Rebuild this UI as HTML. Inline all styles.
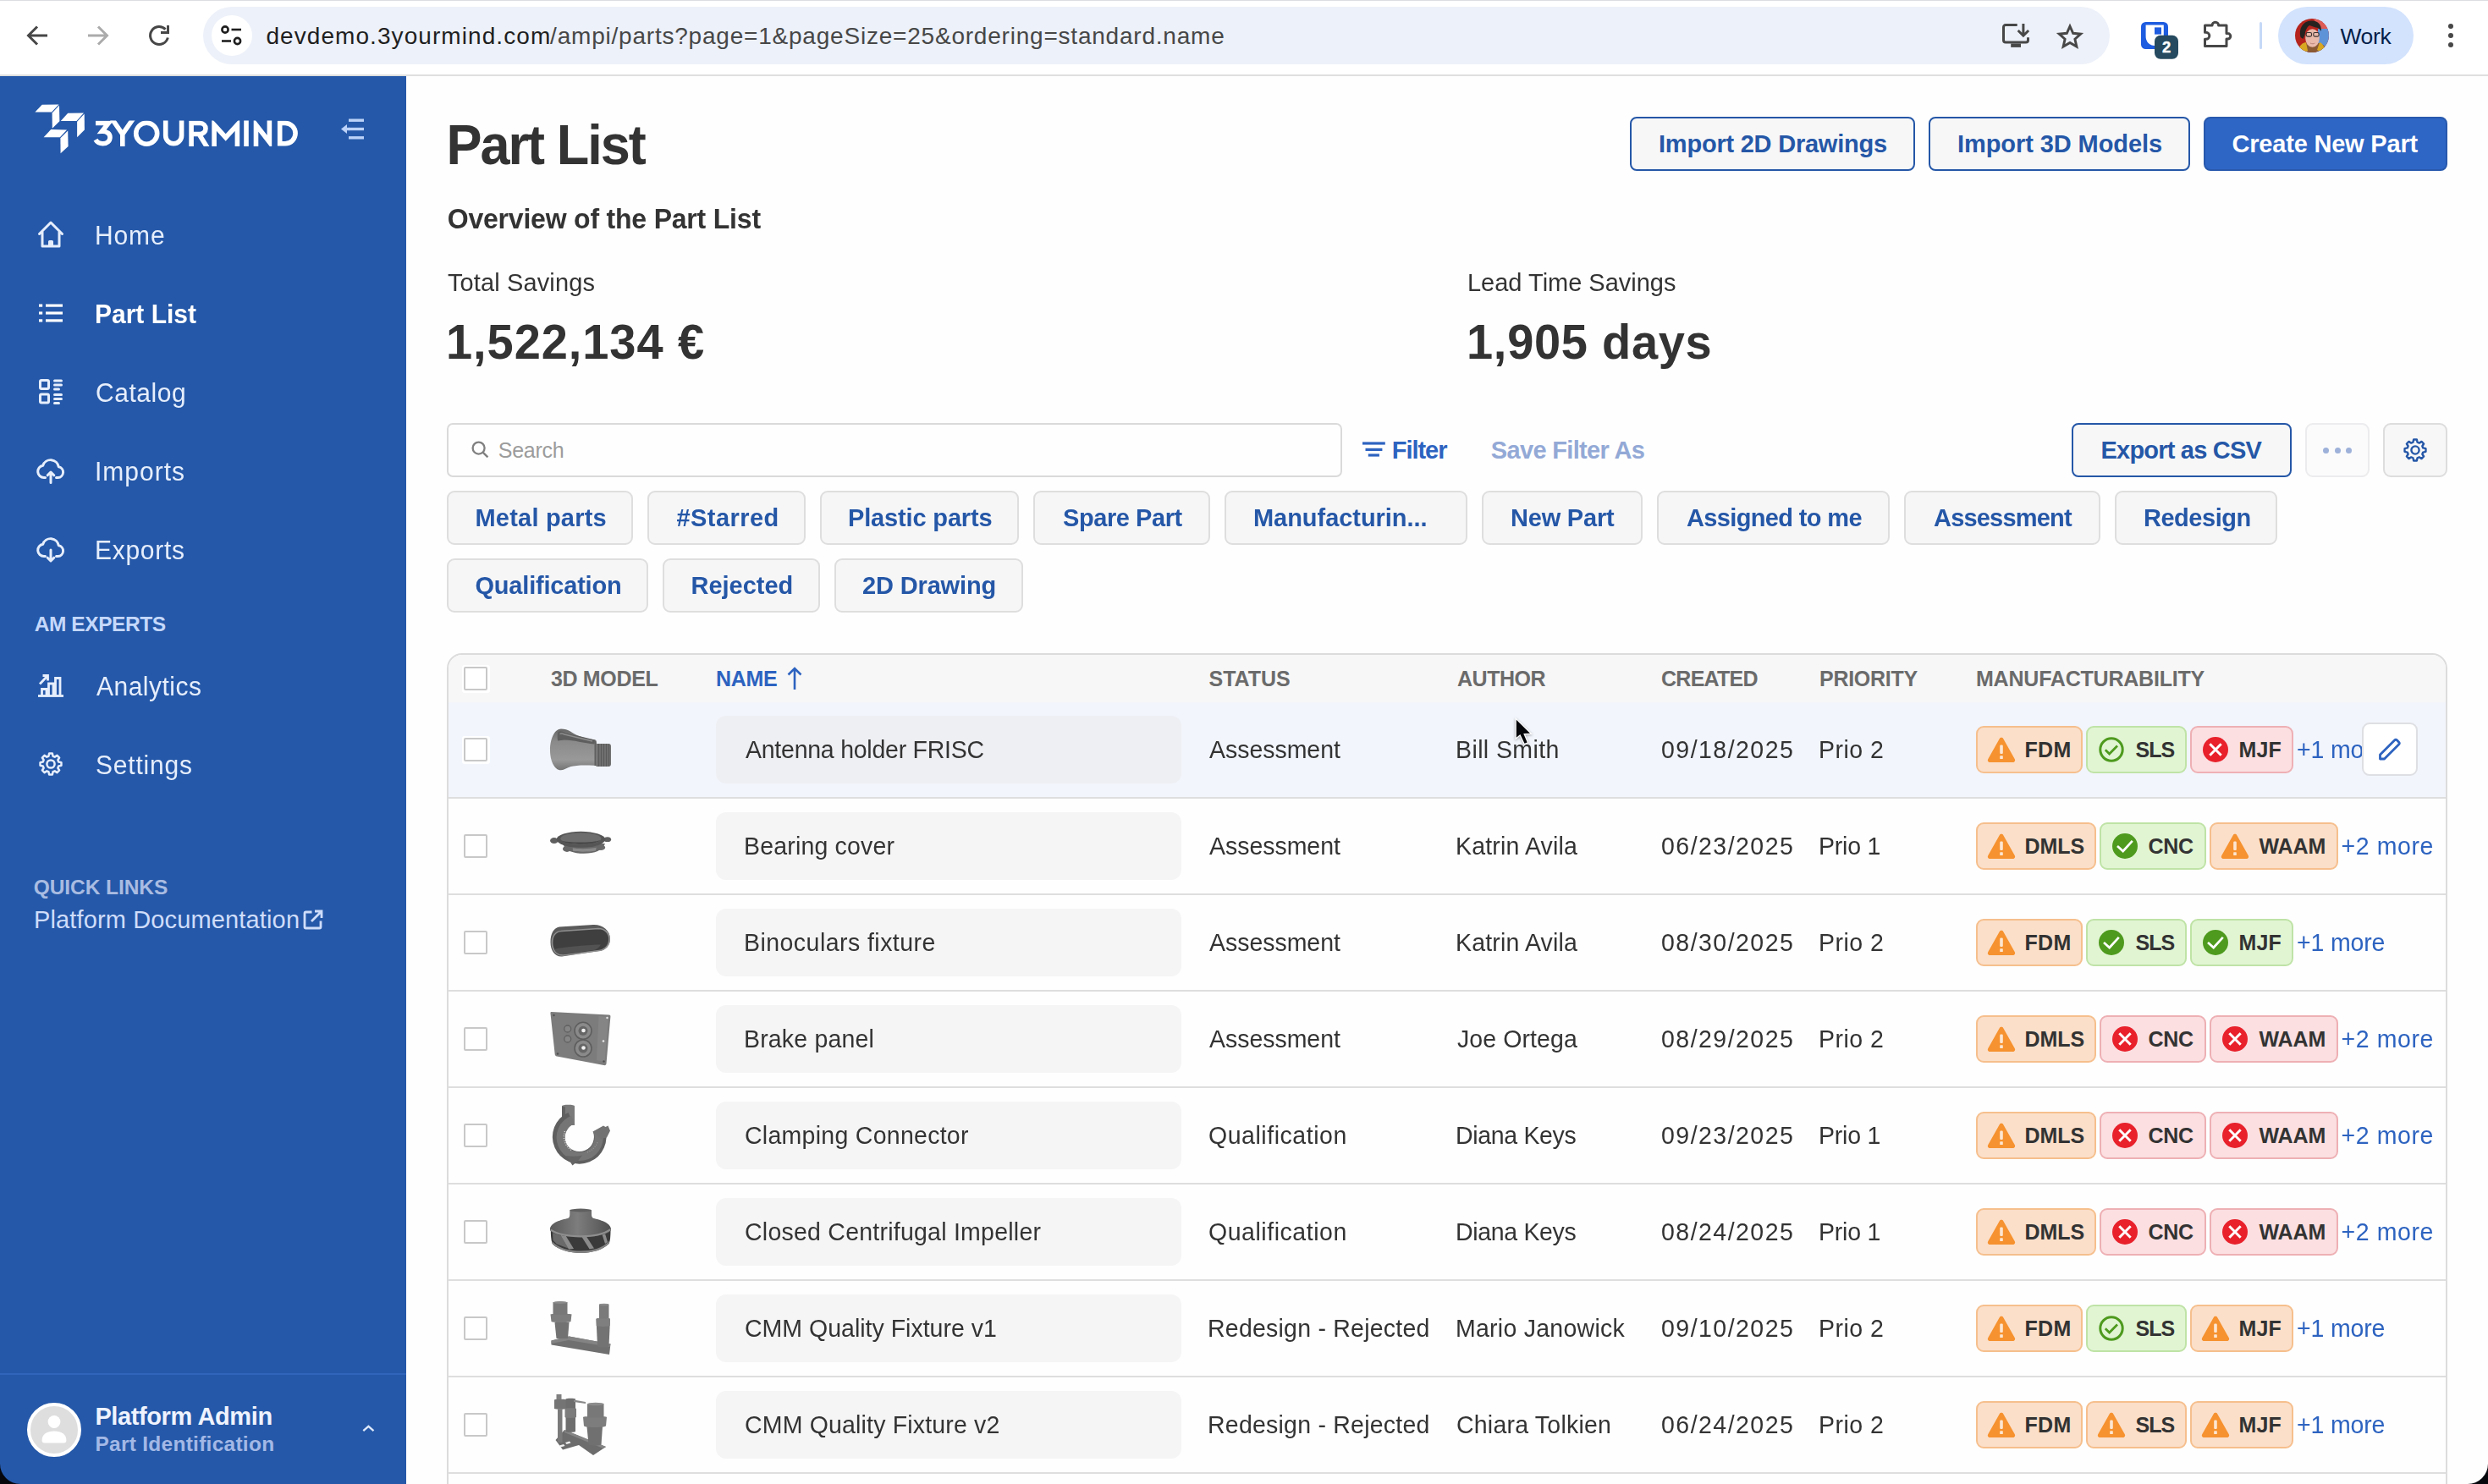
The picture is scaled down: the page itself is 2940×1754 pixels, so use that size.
<!DOCTYPE html>
<html><head><meta charset="utf-8"><title>Part List</title>
<style>
html,body{margin:0;padding:0;width:2940px;height:1754px;overflow:hidden;}
body{width:2940px;height:1754px;overflow:hidden;position:relative;background:#fefefe;font-family:"Liberation Sans",sans-serif;}
.a{position:absolute;box-sizing:border-box;}
.t{position:absolute;white-space:nowrap;}
svg{display:block;overflow:visible;}
#pg{position:absolute;left:0;top:0;width:2940px;height:1754px;overflow:hidden;}
</style></head><body><div id="pg">
<div class="a" style="left:0px;top:0px;width:2940px;height:90px;background:#ffffff;"></div>
<div class="a" style="left:0px;top:0px;width:2940px;height:1px;background:#dcdde1;"></div>
<div class="a" style="left:0px;top:88px;width:2940px;height:2px;background:#dfdfdf;"></div>
<svg class="a" style="left:30px;top:28px;" width="28" height="28" viewBox="0 0 28 28"><path d="M26 14H4M14 3.5L3.5 14L14 24.5" fill="none" stroke="#474747" stroke-width="3"/></svg>
<svg class="a" style="left:102px;top:28px;" width="28" height="28" viewBox="0 0 28 28"><path d="M2 14H24M14 3.5L24.5 14L14 24.5" fill="none" stroke="#ababab" stroke-width="3"/></svg>
<svg class="a" style="left:174px;top:28px;" width="28" height="28" viewBox="0 0 28 28"><path d="M24.3 16.5A10.5 10.5 0 1 1 21.5 6.6" fill="none" stroke="#474747" stroke-width="3"/><path d="M16 10.5H24.5V2" fill="none" stroke="#474747" stroke-width="3"/></svg>
<div class="a" style="left:240px;top:8px;width:2253px;height:68px;background:#edf1f9;border-radius:34px;"></div>
<div class="a" style="left:250px;top:18px;width:48px;height:48px;background:#ffffff;border-radius:24px;"></div>
<svg class="a" style="left:260px;top:30px;" width="28" height="24" viewBox="0 0 28 24"><circle cx="6" cy="5" r="3.6" fill="none" stroke="#1f1f1f" stroke-width="2.6"/><path d="M13.5 5H25" stroke="#1f1f1f" stroke-width="2.6"/><circle cx="20.5" cy="18.5" r="3.6" fill="none" stroke="#1f1f1f" stroke-width="2.6"/><path d="M2 18.5H13" stroke="#1f1f1f" stroke-width="2.6"/></svg>
<span class="t" style="left:314.40px;top:27px;font-size:28px;line-height:31px;color:#1f1f1f;letter-spacing:1.072px;">devdemo.3yourmind.com</span>
<span class="t" style="left:650.10px;top:27px;font-size:28px;line-height:31px;color:#474747;letter-spacing:0.787px;">/ampi/parts?page=1&amp;pageSize=25&amp;ordering=standard.name</span>
<svg class="a" style="left:2366px;top:27px;" width="32" height="30" viewBox="0 0 32 30"><path d="M17.700 2.500H4a2.500 2.500 0 0 0-2.500 2.500V20.500a2.500 2.500 0 0 0 2.500 2.500H28a2.500 2.500 0 0 0 2.500-2.500V17.300" fill="none" stroke="#474747" stroke-width="3"/><rect x="10.200" y="24.500" width="11.800" height="4.400" fill="#474747"/><path d="M24.900 1V14.500M18.700 9L24.900 15.200L31.100 9" fill="none" stroke="#474747" stroke-width="3"/></svg>
<svg class="a" style="left:2430px;top:27px;" width="32" height="30" viewBox="0 0 32 30"><path d="M16 4l3.700 8.300 9 .900-6.800 6 2 8.900L16 23.500 8.100 28.100l2-8.900-6.800-6 9-.900z" fill="none" stroke="#474747" stroke-width="2.900" stroke-linejoin="miter"/></svg>
<svg class="a" style="left:2530px;top:26px;" width="46" height="46" viewBox="0 0 46 46"><rect x="0" y="0" width="32" height="32" rx="5.500" fill="#1e5ce0"/><path d="M5.600 3.400H26.800V28H16C10 28 5.600 23 5.600 17z" fill="#ffffff"/><rect x="16" y="6.400" width="8" height="8.200" fill="#1e5ce0"/><rect x="16" y="15.800" width="28" height="28" rx="7" fill="#264a5f"/></svg>
<span class="t" style="left:2555.00px;top:45px;font-size:18.5px;line-height:21px;color:#ffffff;font-weight:700;-webkit-text-stroke:0.400px #ffffff;">2</span>
<svg class="a" style="left:2604px;top:24px;" width="34" height="34" viewBox="0 0 34 34"><path d="M1.500 6h8.500a3.800 3.800 0 0 1 7.600 0h9.400v9.500h1.500a3.300 3.300 0 0 1 0 6.600h-1.500v8.400H1.500v-8.200h1.300a4 4 0 0 0 0-8h-1.300z" fill="none" stroke="#474747" stroke-width="3" stroke-linejoin="round"/></svg>
<div class="a" style="left:2670px;top:26px;width:3px;height:32px;background:#c5d8f7;border-radius:1.5px;"></div>
<div class="a" style="left:2692px;top:8px;width:160px;height:68px;background:#d3e3fd;border-radius:34px;"></div>
<svg class="a" style="left:2712px;top:22px;" width="40" height="40" viewBox="0 0 40 40"><defs><clipPath id="av"><circle cx="20" cy="20" r="20"/></clipPath></defs><g clip-path="url(#av)"><rect width="40" height="40" fill="#b5241d"/><path d="M22 0h18v14L28 12z" fill="#dd5a55"/><path d="M27 12l13 0v28H27z" fill="#5f93d8"/><path d="M2 40c1-7 6-10 10-11l16 0c5 1 9 4 10 11z" fill="#8a5a35"/><path d="M5 34c2-4 5-6 8-6l2 10-6 2zM35 36c-1-4-3-7-6-8l-3 9 5 3z" fill="#d9a722"/><ellipse cx="20.500" cy="23" rx="8.300" ry="10.800" fill="#e9b9aa"/><path d="M6.500 22C4 12 9 3 19 2.500 27 2 31.500 7 31 15c-2-3-4-4.500-6.500-4.500L17 8c-3 2-5 6-5.500 11.500L9.500 24z" fill="#262220"/><rect x="13.200" y="16.500" width="6.300" height="4.600" rx="1.500" fill="none" stroke="#3b3230" stroke-width="1.100"/><rect x="21.800" y="16.500" width="6.300" height="4.600" rx="1.500" fill="none" stroke="#3b3230" stroke-width="1.100"/><path d="M18 29c2 1 4 1 5.500 0" stroke="#b8837a" stroke-width="1" fill="none"/></g></svg>
<span class="t" style="left:2765.40px;top:28px;font-size:26.5px;line-height:30px;color:#041e49;letter-spacing:-0.370px;">Work</span>
<div class="a" style="left:2892.8px;top:27.8px;width:6.4px;height:6.4px;background:#474747;border-radius:3.2px;"></div>
<div class="a" style="left:2892.8px;top:38.8px;width:6.4px;height:6.4px;background:#474747;border-radius:3.2px;"></div>
<div class="a" style="left:2892.8px;top:49.8px;width:6.4px;height:6.4px;background:#474747;border-radius:3.2px;"></div>
<div class="a" style="left:0px;top:90px;width:480px;height:1664px;background:#2558a8;"></div>
<svg class="a" style="left:0px;top:0px;" width="480" height="200" viewBox="0 0 480 200"><g fill="#ffffff">
<path d="M41.400 132.600L49.700 123.800L69.500 123.400L61 132.600z"/><path d="M61.600 133.400L70 124.400L70.400 143.200L61.800 151.800z"/>
<path d="M71.800 142.900L80.200 133.800L99 133.500L90.500 142.900z"/><path d="M91.100 143.800L99.700 134.600L99.900 153.500L91.100 162.200z"/>
<path d="M51.600 162.300L60.200 153.100L79 153.500L70.800 162.300z"/><path d="M71.400 163.200L80.200 154.600L80.600 172.900L71.600 181.300z"/>
</g></svg>
<svg class="a" style="left:0px;top:0px;" width="480" height="200" viewBox="0 0 480 200"><defs><clipPath id="lg"><rect x="105" y="142.500" width="255" height="30.400"/></clipPath></defs><g clip-path="url(#lg)" fill="none" stroke="#ffffff" stroke-width="5.600" stroke-linejoin="miter" stroke-miterlimit="10"><path d="M113 145.500H128.200L120.500 155.200C127 155 130 158.500 130 162.200c0 4.500-3.500 7.600-8.500 7.600-3.700 0-6.800-1.700-8.500-4.600"/><path d="M132 140L144.800 158.500L157.600 140M144.800 157.500V175"/><circle cx="173.200" cy="157.700" r="12.500"/><path d="M195.700 140V160.300a9.450 9.450 0 0 0 18.900 0V140"/><path d="M226.100 175V145.500H236.500a6.500 6.500 0 0 1 0 13H226.100M235.300 158.700L246 176"/><path d="M253.100 175V147.500L266.700 162.500L280.400 147.500V175"/><path d="M291 140V175"/><path d="M302.500 175V147.500L318.400 168V140"/><path d="M330.700 145.500H337a12.100 12.100 0 0 1 0 24.200H330.700z"/></g></svg>
<svg class="a" style="left:403px;top:139px;" width="28" height="28" viewBox="0 0 28 28"><g fill="#bcd2f8"><rect x="9" y="1.500" width="18" height="3.400"/><rect x="9" y="11.800" width="18" height="3.400"/><rect x="9" y="22.100" width="18" height="3.400"/><path d="M0 13.500L7 8v11z"/><rect x="4" y="11.800" width="6" height="3.400"/></g></svg>
<span class="t" style="left:112.00px;top:262px;font-size:30px;line-height:33px;color:#e6eefc;letter-spacing:0.884px;transform:scaleY(1.047);transform-origin:0 27px;">Home</span>
<span class="t" style="left:112.00px;top:355px;font-size:30px;line-height:33px;color:#ffffff;font-weight:700;letter-spacing:-0.005px;transform:scaleY(1.047);transform-origin:0 27px;">Part List</span>
<span class="t" style="left:113.00px;top:448px;font-size:30px;line-height:33px;color:#e6eefc;letter-spacing:0.546px;transform:scaleY(1.047);transform-origin:0 27px;">Catalog</span>
<span class="t" style="left:112.00px;top:541px;font-size:30px;line-height:33px;color:#e6eefc;letter-spacing:0.995px;transform:scaleY(1.047);transform-origin:0 27px;">Imports</span>
<span class="t" style="left:112.00px;top:634px;font-size:30px;line-height:33px;color:#e6eefc;letter-spacing:0.714px;transform:scaleY(1.047);transform-origin:0 27px;">Exports</span>
<span class="t" style="left:114.00px;top:795px;font-size:30px;line-height:33px;color:#e6eefc;letter-spacing:0.494px;transform:scaleY(1.047);transform-origin:0 27px;">Analytics</span>
<span class="t" style="left:113.00px;top:888px;font-size:30px;line-height:33px;color:#e6eefc;letter-spacing:0.799px;transform:scaleY(1.047);transform-origin:0 27px;">Settings</span>
<svg class="a" style="left:44px;top:260px;" width="32" height="34" viewBox="0 0 32 34"><path d="M2.500 16.500L16 3L29.500 16.500M6 14v17h20V14M14.500 31v-5.500h3V31" fill="none" stroke="#e6eefc" stroke-width="3" stroke-linejoin="round" stroke-linecap="round" stroke-linecap="butt"/></svg>
<svg class="a" style="left:46px;top:359px;" width="28" height="22" viewBox="0 0 28 22"><g fill="#ffffff"><rect x="0" y="0.500" width="4.200" height="3.200"/><rect x="8" y="0.500" width="20" height="3.200"/><rect x="0" y="9.400" width="4.200" height="3.200"/><rect x="8" y="9.400" width="20" height="3.200"/><rect x="0" y="18.300" width="4.200" height="3.200"/><rect x="8" y="18.300" width="20" height="3.200"/></g></svg>
<svg class="a" style="left:46px;top:448px;" width="28" height="30" viewBox="0 0 28 30"><g fill="none" stroke="#e6eefc" stroke-width="3"><rect x="1.500" y="1.500" width="10" height="10" rx="1.500"/><rect x="1.500" y="18" width="10" height="10" rx="1.500"/></g><g fill="#e6eefc"><rect x="17" y="0.500" width="11" height="3" rx="1.500"/><rect x="17" y="5.500" width="11" height="3" rx="1.500"/><rect x="17" y="10.500" width="8" height="3" rx="1.500"/><rect x="17" y="17" width="11" height="3" rx="1.500"/><rect x="17" y="22" width="11" height="3" rx="1.500"/><rect x="17" y="27" width="8" height="3" rx="1.500"/></g></svg>
<svg class="a" style="left:43px;top:542px;" width="34" height="30" viewBox="0 0 34 30"><path d="M10.500 22.500H9a7.200 7.200 0 0 1-1.300-14.300A9.600 9.600 0 0 1 26.300 9.800 6.400 6.400 0 0 1 25.500 22.500H23.500" fill="none" stroke="#e6eefc" stroke-width="3" stroke-linejoin="round" stroke-linecap="round"/><path d="M17 28.500V17M13.200 19.800l3.800-3.800 3.800 3.800" fill="none" stroke="#e6eefc" stroke-width="3" stroke-linejoin="round" stroke-linecap="round"/></svg>
<svg class="a" style="left:43px;top:635px;" width="34" height="30" viewBox="0 0 34 30"><path d="M10.500 22.500H9a7.200 7.200 0 0 1-1.300-14.300A9.600 9.600 0 0 1 26.300 9.800 6.400 6.400 0 0 1 25.500 22.500H23.500" fill="none" stroke="#e6eefc" stroke-width="3" stroke-linejoin="round" stroke-linecap="round"/><path d="M17 15V27M13.200 24.200l3.800 3.800 3.800-3.800" fill="none" stroke="#e6eefc" stroke-width="3" stroke-linejoin="round" stroke-linecap="round"/></svg>
<svg class="a" style="left:45px;top:796px;" width="30" height="28" viewBox="0 0 30 28"><g fill="none" stroke="#e6eefc" stroke-width="2.800"><path d="M0 26.500H30"/><path d="M4.500 26v-7.500h5.500V26M12.500 26V12h5.500v14M20.500 26V5.500h5.500V26"/><path d="M2 12.500L10.500 3.500M5.500 2.500h6v6"/></g></svg>
<svg class="a" style="left:46.2px;top:889px;" width="28" height="28" viewBox="0 0 28 28"><g fill="none" stroke="#e6eefc" stroke-width="2.500" stroke-linejoin="round"><path d="M11.43 4.75L12.14 1.54L15.86 1.54L16.57 4.75L18.73 5.64L21.49 3.87L24.13 6.51L22.36 9.27L23.25 11.43L26.46 12.14L26.46 15.86L23.25 16.57L22.36 18.73L24.13 21.49L21.49 24.13L18.73 22.36L16.57 23.25L15.86 26.46L12.14 26.46L11.43 23.25L9.27 22.36L6.51 24.13L3.87 21.49L5.64 18.73L4.75 16.57L1.54 15.86L1.54 12.14L4.75 11.43L5.64 9.27L3.87 6.51L6.51 3.87L9.27 5.64z"/><circle cx="14" cy="14" r="4.600"/></g></svg>
<span class="t" style="left:40.70px;top:724px;font-size:24.5px;line-height:27px;color:#c5d8fb;font-weight:700;letter-spacing:-0.427px;">AM EXPERTS</span>
<span class="t" style="left:39.70px;top:1035px;font-size:24.5px;line-height:27px;color:#a9bce2;font-weight:700;letter-spacing:-0.061px;">QUICK LINKS</span>
<span class="t" style="left:39.90px;top:1071px;font-size:29px;line-height:32px;color:#cfddfa;letter-spacing:0.145px;">Platform Documentation</span>
<svg class="a" style="left:358px;top:1075px;" width="24" height="24" viewBox="0 0 24 24"><path d="M10.500 3H3.500a1.500 1.500 0 0 0-1.500 1.500v16a1.500 1.500 0 0 0 1.500 1.500h16a1.500 1.500 0 0 0 1.500-1.500V13.500M14 2h8v8M22 2L10 14" fill="none" stroke="#cfddfa" stroke-width="2.800"/></svg>
<div class="a" style="left:0px;top:1623px;width:480px;height:2px;background:#3065bb;"></div>
<div class="a" style="left:32px;top:1658px;width:64px;height:64px;background:#dedede;border:4px solid #ffffff;border-radius:32px;"></div>
<svg class="a" style="left:32px;top:1658px;" width="64" height="64" viewBox="0 0 64 64"><circle cx="32" cy="22.500" r="7.400" fill="#ffffff"/><path d="M17.600 44.500c0-7.500 6-11 14.400-11s14.400 3.500 14.400 11c0 1.800-1 3-2.800 3H20.400c-1.800 0-2.800-1.200-2.800-3z" fill="#ffffff"/></svg>
<span class="t" style="left:112.40px;top:1658px;font-size:29px;line-height:32px;color:#eef3fe;font-weight:700;letter-spacing:-0.393px;">Platform Admin</span>
<span class="t" style="left:112.40px;top:1693px;font-size:24.5px;line-height:27px;color:#a3b8e6;font-weight:700;letter-spacing:0.269px;">Part Identification</span>
<svg class="a" style="left:427px;top:1679.5px;" width="16" height="14" viewBox="0 0 16 14"><path d="M2.300 11.200L8.400 5.800L14.500 11.200" fill="none" stroke="#dde8fb" stroke-width="2.300"/></svg>
<span class="t" style="left:527.50px;top:137px;font-size:63px;line-height:70px;color:#333333;font-weight:700;letter-spacing:-1.985px;transform:scaleY(1.050);transform-origin:0 57px;">Part List</span>
<span class="t" style="left:528.70px;top:241px;font-size:32px;line-height:36px;color:#333333;font-weight:700;letter-spacing:-0.203px;transform:scaleY(1.036);transform-origin:0 29px;">Overview of the Part List</span>
<span class="t" style="left:529.00px;top:318px;font-size:29px;line-height:32px;color:#333333;letter-spacing:0.117px;transform:scaleY(1.027);transform-origin:0 26px;">Total Savings</span>
<span class="t" style="left:527.00px;top:373px;font-size:56px;line-height:63px;color:#333333;font-weight:700;letter-spacing:0.930px;transform:scaleY(1.036);transform-origin:0 51px;">1,522,134 €</span>
<span class="t" style="left:1734.00px;top:318px;font-size:29px;line-height:32px;color:#333333;letter-spacing:-0.010px;transform:scaleY(1.027);transform-origin:0 26px;">Lead Time Savings</span>
<span class="t" style="left:1733.00px;top:373px;font-size:56px;line-height:63px;color:#333333;font-weight:700;letter-spacing:0.711px;transform:scaleY(1.036);transform-origin:0 51px;">1,905 days</span>
<div class="a" style="left:1926px;top:138px;width:337px;height:64px;background:#f7f7f8;border:2px solid #2557a7;border-radius:8px;"></div>
<span class="t" style="left:1960.00px;top:154px;font-size:29px;line-height:32px;color:#2557a7;font-weight:700;letter-spacing:-0.224px;">Import 2D Drawings</span>
<div class="a" style="left:2279px;top:138px;width:309px;height:64px;background:#f7f7f8;border:2px solid #2557a7;border-radius:8px;"></div>
<span class="t" style="left:2313.00px;top:154px;font-size:29px;line-height:32px;color:#2557a7;font-weight:700;letter-spacing:-0.079px;">Import 3D Models</span>
<div class="a" style="left:2604px;top:138px;width:288px;height:64px;background:#2e66c5;border:2px solid #2859ad;border-radius:8px;"></div>
<span class="t" style="left:2637.50px;top:154px;font-size:29px;line-height:32px;color:#ffffff;font-weight:700;letter-spacing:-0.199px;">Create New Part</span>
<div class="a" style="left:528px;top:500px;width:1058px;height:64px;background:#fefefe;border:2px solid #dadada;border-radius:7px;"></div>
<svg class="a" style="left:556px;top:521px;" width="22" height="22" viewBox="0 0 22 22"><circle cx="9.600" cy="8.600" r="7" fill="none" stroke="#808080" stroke-width="2.300"/><path d="M14.600 13.600l5.800 5.800" stroke="#808080" stroke-width="2.400"/></svg>
<span class="t" style="left:588.80px;top:518px;font-size:25px;line-height:28px;color:#9c9c9c;letter-spacing:-0.263px;">Search</span>
<svg class="a" style="left:1610px;top:522px;" width="27" height="20" viewBox="0 0 27 20"><g fill="#2d63c0"><rect x="0" y="0.400" width="26.800" height="3.200"/><rect x="3.500" y="7.800" width="19.900" height="3.200"/><rect x="6.800" y="14.400" width="13.100" height="3.200"/></g></svg>
<span class="t" style="left:1644.80px;top:516px;font-size:29px;line-height:32px;color:#2d63c0;font-weight:700;letter-spacing:-1.044px;">Filter</span>
<span class="t" style="left:1761.80px;top:516px;font-size:29px;line-height:32px;color:#93a9d6;font-weight:700;letter-spacing:-0.663px;">Save Filter As</span>
<div class="a" style="left:2448px;top:500px;width:260px;height:64px;background:#f7f7f8;border:2px solid #2557a7;border-radius:8px;"></div>
<span class="t" style="left:2482.50px;top:516px;font-size:29px;line-height:32px;color:#2557a7;font-weight:700;letter-spacing:-0.792px;">Export as CSV</span>
<div class="a" style="left:2724px;top:500px;width:76px;height:64px;background:#fbfbfc;border:2px solid #ececee;border-radius:9px;"></div>
<div class="a" style="left:2745px;top:528.5px;width:7px;height:7px;background:#9db1d9;border-radius:3.5px;"></div>
<div class="a" style="left:2758.5px;top:528.5px;width:7px;height:7px;background:#9db1d9;border-radius:3.5px;"></div>
<div class="a" style="left:2772px;top:528.5px;width:7px;height:7px;background:#9db1d9;border-radius:3.5px;"></div>
<div class="a" style="left:2816px;top:500px;width:76px;height:64px;background:#f7f7f8;border:2px solid #dddddd;border-radius:9px;"></div>
<svg class="a" style="left:2840px;top:518.2px;" width="28" height="28" viewBox="0 0 28 28"><g fill="none" stroke="#2557a7" stroke-width="2.400" stroke-linejoin="round"><path d="M11.43 4.75L12.14 1.54L15.86 1.54L16.57 4.75L18.73 5.64L21.49 3.87L24.13 6.51L22.36 9.27L23.25 11.43L26.46 12.14L26.46 15.86L23.25 16.57L22.36 18.73L24.13 21.49L21.49 24.13L18.73 22.36L16.57 23.25L15.86 26.46L12.14 26.46L11.43 23.25L9.27 22.36L6.51 24.13L3.87 21.49L5.64 18.73L4.75 16.57L1.54 15.86L1.54 12.14L4.75 11.43L5.64 9.27L3.87 6.51L6.51 3.87L9.27 5.64z"/><circle cx="14" cy="14" r="4.600"/></g></svg>
<div class="a" style="left:528px;top:580px;width:220px;height:64px;background:#f6f6f7;border:2px solid #dedede;border-radius:9px;"></div>
<span class="t" style="left:561.50px;top:596px;font-size:29px;line-height:32px;color:#2557a7;font-weight:700;letter-spacing:0.202px;transform:scaleY(1.012);transform-origin:0 26px;">Metal parts</span>
<div class="a" style="left:765px;top:580px;width:187px;height:64px;background:#f6f6f7;border:2px solid #dedede;border-radius:9px;"></div>
<span class="t" style="left:799.50px;top:596px;font-size:29px;line-height:32px;color:#2557a7;font-weight:700;letter-spacing:0.435px;transform:scaleY(1.012);transform-origin:0 26px;">#Starred</span>
<div class="a" style="left:969px;top:580px;width:235px;height:64px;background:#f6f6f7;border:2px solid #dedede;border-radius:9px;"></div>
<span class="t" style="left:1002.00px;top:596px;font-size:29px;line-height:32px;color:#2557a7;font-weight:700;letter-spacing:-0.155px;transform:scaleY(1.012);transform-origin:0 26px;">Plastic parts</span>
<div class="a" style="left:1221px;top:580px;width:209px;height:64px;background:#f6f6f7;border:2px solid #dedede;border-radius:9px;"></div>
<span class="t" style="left:1256.00px;top:596px;font-size:29px;line-height:32px;color:#2557a7;font-weight:700;letter-spacing:-0.436px;transform:scaleY(1.012);transform-origin:0 26px;">Spare Part</span>
<div class="a" style="left:1447px;top:580px;width:287px;height:64px;background:#f6f6f7;border:2px solid #dedede;border-radius:9px;"></div>
<span class="t" style="left:1481.00px;top:596px;font-size:29px;line-height:32px;color:#2557a7;font-weight:700;letter-spacing:-0.048px;transform:scaleY(1.012);transform-origin:0 26px;">Manufacturin...</span>
<div class="a" style="left:1751px;top:580px;width:190px;height:64px;background:#f6f6f7;border:2px solid #dedede;border-radius:9px;"></div>
<span class="t" style="left:1785.00px;top:596px;font-size:29px;line-height:32px;color:#2557a7;font-weight:700;letter-spacing:-0.207px;transform:scaleY(1.012);transform-origin:0 26px;">New Part</span>
<div class="a" style="left:1958px;top:580px;width:275px;height:64px;background:#f6f6f7;border:2px solid #dedede;border-radius:9px;"></div>
<span class="t" style="left:1993.00px;top:596px;font-size:29px;line-height:32px;color:#2557a7;font-weight:700;letter-spacing:-0.639px;transform:scaleY(1.012);transform-origin:0 26px;">Assigned to me</span>
<div class="a" style="left:2250px;top:580px;width:232px;height:64px;background:#f6f6f7;border:2px solid #dedede;border-radius:9px;"></div>
<span class="t" style="left:2285.00px;top:596px;font-size:29px;line-height:32px;color:#2557a7;font-weight:700;letter-spacing:-0.802px;transform:scaleY(1.012);transform-origin:0 26px;">Assessment</span>
<div class="a" style="left:2499px;top:580px;width:192px;height:64px;background:#f6f6f7;border:2px solid #dedede;border-radius:9px;"></div>
<span class="t" style="left:2533.00px;top:596px;font-size:29px;line-height:32px;color:#2557a7;font-weight:700;letter-spacing:-0.474px;transform:scaleY(1.012);transform-origin:0 26px;">Redesign</span>
<div class="a" style="left:528px;top:660px;width:238px;height:64px;background:#f6f6f7;border:2px solid #dedede;border-radius:9px;"></div>
<span class="t" style="left:561.50px;top:676px;font-size:29px;line-height:32px;color:#2557a7;font-weight:700;letter-spacing:-0.202px;transform:scaleY(1.012);transform-origin:0 26px;">Qualification</span>
<div class="a" style="left:783px;top:660px;width:186px;height:64px;background:#f6f6f7;border:2px solid #dedede;border-radius:9px;"></div>
<span class="t" style="left:816.50px;top:676px;font-size:29px;line-height:32px;color:#2557a7;font-weight:700;letter-spacing:-0.025px;transform:scaleY(1.012);transform-origin:0 26px;">Rejected</span>
<div class="a" style="left:986px;top:660px;width:223px;height:64px;background:#f6f6f7;border:2px solid #dedede;border-radius:9px;"></div>
<span class="t" style="left:1019.00px;top:676px;font-size:29px;line-height:32px;color:#2557a7;font-weight:700;letter-spacing:-0.146px;transform:scaleY(1.012);transform-origin:0 26px;">2D Drawing</span>
<div class="a" style="left:528px;top:772px;width:2364px;height:1000px;background:#fefefe;border:2px solid #dcdcdc;border-radius:18px;"></div>
<div class="a" style="left:530px;top:774px;width:2360px;height:56px;background:#f7f7f7;border-radius:16px 16px 0 0;"></div>
<span class="t" style="left:651.00px;top:788px;font-size:25px;line-height:28px;color:#6b6b6b;font-weight:700;letter-spacing:-0.345px;">3D MODEL</span>
<span class="t" style="left:846.00px;top:788px;font-size:25px;line-height:28px;color:#2d63c0;font-weight:700;letter-spacing:-0.312px;">NAME</span>
<svg class="a" style="left:929px;top:787px;" width="20" height="30" viewBox="0 0 20 30"><path d="M10 28V3M2.500 10.500L10 3L17.500 10.500" fill="none" stroke="#2d63c0" stroke-width="2.600"/></svg>
<span class="t" style="left:1428.50px;top:788px;font-size:25px;line-height:28px;color:#6b6b6b;font-weight:700;letter-spacing:-0.024px;">STATUS</span>
<span class="t" style="left:1722.00px;top:788px;font-size:25px;line-height:28px;color:#6b6b6b;font-weight:700;letter-spacing:-0.477px;">AUTHOR</span>
<span class="t" style="left:1963.00px;top:788px;font-size:25px;line-height:28px;color:#6b6b6b;font-weight:700;letter-spacing:-0.738px;">CREATED</span>
<span class="t" style="left:2150.00px;top:788px;font-size:25px;line-height:28px;color:#6b6b6b;font-weight:700;letter-spacing:-0.272px;">PRIORITY</span>
<span class="t" style="left:2335.00px;top:788px;font-size:25px;line-height:28px;color:#6b6b6b;font-weight:700;letter-spacing:-0.214px;">MANUFACTURABILITY</span>
<div class="a" style="left:545.5px;top:785.5px;width:33px;height:33px;background:#ffffff;border-radius:3px;"></div>
<div class="a" style="left:548px;top:788px;width:28px;height:28px;background:#ffffff;border:2px solid #c8c8c8;border-radius:2px;"></div>
<div class="a" style="left:530px;top:830px;width:2360px;height:112px;background:#f2f5fc;"></div>
<div class="a" style="left:530px;top:942px;width:2360px;height:2px;background:#dedede;"></div>
<div class="a" style="left:545.5px;top:869.5px;width:33px;height:33px;background:#ffffff;border-radius:3px;"></div>
<div class="a" style="left:548px;top:872px;width:28px;height:28px;background:#ffffff;border:2px solid #c8c8c8;border-radius:2px;"></div>
<svg class="a" style="left:650px;top:850px" width="72" height="72" viewBox="0 0 72 72"><defs><linearGradient id="g0" x1="0" y1="0" x2="0" y2="1"><stop offset="0" stop-color="#666666"/><stop offset=".3" stop-color="#8a8a8a"/><stop offset=".75" stop-color="#999999"/><stop offset="1" stop-color="#747474"/></linearGradient></defs>
<path d="M54.500 29h14.500c2 0 3 1 3 3v21c0 2-1 3-3 3H54.500z" fill="#727272"/>
<path d="M57.500 29v27M60.500 29v27M63.500 29v27M66.500 29v27M69.500 29.500v26" stroke="#5a5a5a" stroke-width="1.200"/>
<path d="M13 11.500C17 11.500 21 12.500 24 14.500 30 18.500 38 22.500 54 24.500L55 28V55L51.500 54.800C40 54 30 54.500 24.500 56 20 57.500 17 60 13 60.300 5 60.500 0 49 0 36.500 0 23 5.500 11.500 13 11.500z" fill="url(#g0)"/>
<path d="M9.500 15C12 13.500 15 14.500 17.500 16L53 24.500 52.500 29.500C40 28.500 28 24.500 17 24.500L9 25.500C8.500 21 8.500 17.500 9.500 15z" fill="#5e5e5e"/>
<path d="M11.500 17.500C13 16.500 15 17 17 18L50 26" fill="none" stroke="#8d8d8d" stroke-width="1.500"/>
<path d="M53.500 25.500V55" stroke="#5f5f5f" stroke-width="2"/></svg>
<div class="a" style="left:846px;top:846px;width:550px;height:80px;background:#eeeff3;border-radius:12px;"></div>
<span class="t" style="left:881.00px;top:870px;font-size:28.5px;line-height:32px;color:#333333;letter-spacing:-0.246px;transform:scaleY(1.051);transform-origin:0 26px;">Antenna holder FRISC</span>
<span class="t" style="left:1429.00px;top:870px;font-size:28.5px;line-height:32px;color:#333333;letter-spacing:-0.035px;transform:scaleY(1.051);transform-origin:0 26px;">Assessment</span>
<span class="t" style="left:1720.00px;top:870px;font-size:28.5px;line-height:32px;color:#333333;letter-spacing:0.397px;transform:scaleY(1.051);transform-origin:0 26px;">Bill Smith</span>
<span class="t" style="left:1963.00px;top:870px;font-size:28.5px;line-height:32px;color:#333333;letter-spacing:1.468px;transform:scaleY(1.051);transform-origin:0 26px;">09/18/2025</span>
<span class="t" style="left:2149.00px;top:870px;font-size:28.5px;line-height:32px;color:#333333;letter-spacing:0.479px;transform:scaleY(1.051);transform-origin:0 26px;">Prio 2</span>
<div class="a" style="left:2335px;top:858px;width:126px;height:56px;background:#fbdfc9;border:2px solid #f6bf8d;border-radius:9px;"></div>
<svg class="a" style="left:2348px;top:870px;" width="34" height="31" viewBox="0 0 34 31"><path d="M17 1.800c1 0 1.800.500 2.300 1.400l13.500 24c1 1.800-.200 3.800-2.300 3.800H3.500c-2.100 0-3.300-2-2.300-3.800l13.500-24C15.200 2.300 16 1.800 17 1.800z" fill="#f6922f"/><rect x="15.200" y="10.500" width="3.600" height="10.500" rx="1.200" fill="#fde6d2"/><rect x="15.200" y="23.200" width="3.600" height="3.800" rx=".600" fill="#fde6d2"/></svg>
<span class="t" style="left:2392.50px;top:872px;font-size:25px;line-height:28px;color:#333333;font-weight:700;letter-spacing:0.334px;">FDM</span>
<div class="a" style="left:2465px;top:858px;width:119px;height:56px;background:#e1f5d3;border:2px solid #bfe3a6;border-radius:9px;"></div>
<svg class="a" style="left:2480px;top:871px;" width="30" height="30" viewBox="0 0 30 30"><circle cx="15" cy="15" r="13.200" fill="none" stroke="#4e9a1e" stroke-width="3"/><path d="M7.800 15.300L12.600 20L22 10.500" fill="none" stroke="#4e9a1e" stroke-width="2.700"/></svg>
<span class="t" style="left:2523.50px;top:872px;font-size:25px;line-height:28px;color:#333333;font-weight:700;letter-spacing:-0.975px;">SLS</span>
<div class="a" style="left:2588px;top:858px;width:122px;height:56px;background:#fbdfe1;border:2px solid #eeb0b4;border-radius:9px;"></div>
<svg class="a" style="left:2603px;top:871px;" width="30" height="30" viewBox="0 0 30 30"><circle cx="15" cy="15" r="15" fill="#e8212b"/><path d="M8.300 8.300l13.400 13.400M21.700 8.300L8.300 21.700" fill="none" stroke="#ffffff" stroke-width="3"/></svg>
<span class="t" style="left:2645.50px;top:872px;font-size:25px;line-height:28px;color:#333333;font-weight:700;letter-spacing:0.135px;">MJF</span>
<span class="t" style="left:2714.00px;top:870px;font-size:28.5px;line-height:32px;color:#2d63c0;letter-spacing:-0.168px;transform:scaleY(1.051);transform-origin:0 26px;">+1 more</span>
<div class="a" style="left:2791px;top:854px;width:66px;height:63px;background:#ffffff;border:2px solid #dedfe3;border-radius:9px;"></div>
<svg class="a" style="left:2810px;top:871px;" width="28" height="28" viewBox="0 0 28 28"><path d="M2.500 21L19.500 4a2.200 2.200 0 0 1 3.100 0l1.900 1.900a2.200 2.200 0 0 1 0 3.100L7.500 26H2.500z" fill="none" stroke="#2d63c0" stroke-width="2.800" stroke-linejoin="round"/></svg>
<div class="a" style="left:530px;top:1056px;width:2360px;height:2px;background:#dedede;"></div>
<div class="a" style="left:548px;top:986px;width:28px;height:28px;background:#ffffff;border:2px solid #c8c8c8;border-radius:2px;"></div>
<svg class="a" style="left:650px;top:964px" width="72" height="72" viewBox="0 0 72 72"><ellipse cx="20" cy="39.300" rx="5" ry="3.600" fill="#666666"/><ellipse cx="60" cy="37.700" rx="5.200" ry="3.200" fill="#6c6c6c"/>
<path d="M15.500 34C18 41.500 27 44.800 40 44.800S62 41 65 33z" fill="#676767"/>
<path d="M26.700 38.300C32 39.500 48 39.500 54.700 37.800L54 41.500C46 43 33 43 27 41.800z" fill="#898989"/>
<ellipse cx="4.800" cy="29.600" rx="4.800" ry="3.500" fill="#5f5f5f"/><ellipse cx="67.800" cy="28.200" rx="4.300" ry="2.900" fill="#5f5f5f"/>
<ellipse cx="36.400" cy="28.200" rx="28.800" ry="9.500" fill="#555555"/>
<ellipse cx="36.400" cy="27.200" rx="24" ry="7" fill="#6d6d6d"/>
<path d="M13.500 29.500C20 35.500 53 35.500 59.500 29 52 32.300 21 32.500 13.500 29.500z" fill="#484848"/></svg>
<div class="a" style="left:846px;top:960px;width:550px;height:80px;background:#f5f5f5;border-radius:12px;"></div>
<span class="t" style="left:879.00px;top:984px;font-size:28.5px;line-height:32px;color:#333333;letter-spacing:0.179px;transform:scaleY(1.051);transform-origin:0 26px;">Bearing cover</span>
<span class="t" style="left:1429.00px;top:984px;font-size:28.5px;line-height:32px;color:#333333;letter-spacing:-0.035px;transform:scaleY(1.051);transform-origin:0 26px;">Assessment</span>
<span class="t" style="left:1720.00px;top:984px;font-size:28.5px;line-height:32px;color:#333333;letter-spacing:0.163px;transform:scaleY(1.051);transform-origin:0 26px;">Katrin Avila</span>
<span class="t" style="left:1963.00px;top:984px;font-size:28.5px;line-height:32px;color:#333333;letter-spacing:1.468px;transform:scaleY(1.051);transform-origin:0 26px;">06/23/2025</span>
<span class="t" style="left:2149.00px;top:984px;font-size:28.5px;line-height:32px;color:#333333;letter-spacing:-0.221px;transform:scaleY(1.051);transform-origin:0 26px;">Prio 1</span>
<div class="a" style="left:2335px;top:972px;width:142px;height:56px;background:#fbdfc9;border:2px solid #f6bf8d;border-radius:9px;"></div>
<svg class="a" style="left:2348px;top:984px;" width="34" height="31" viewBox="0 0 34 31"><path d="M17 1.800c1 0 1.800.500 2.300 1.400l13.500 24c1 1.800-.200 3.800-2.300 3.800H3.500c-2.100 0-3.300-2-2.300-3.800l13.500-24C15.200 2.300 16 1.800 17 1.800z" fill="#f6922f"/><rect x="15.200" y="10.500" width="3.600" height="10.500" rx="1.200" fill="#fde6d2"/><rect x="15.200" y="23.200" width="3.600" height="3.800" rx=".600" fill="#fde6d2"/></svg>
<span class="t" style="left:2392.50px;top:986px;font-size:25px;line-height:28px;color:#333333;font-weight:700;letter-spacing:-0.051px;">DMLS</span>
<div class="a" style="left:2481px;top:972px;width:126px;height:56px;background:#e1f5d3;border:2px solid #bfe3a6;border-radius:9px;"></div>
<svg class="a" style="left:2496px;top:985px;" width="30" height="30" viewBox="0 0 30 30"><circle cx="15" cy="15" r="15" fill="#4e9a1e"/><path d="M6 15L12.700 21L23.800 8.800" fill="none" stroke="#ffffff" stroke-width="2.700"/></svg>
<span class="t" style="left:2538.50px;top:986px;font-size:25px;line-height:28px;color:#333333;font-weight:700;letter-spacing:-0.309px;">CNC</span>
<div class="a" style="left:2611px;top:972px;width:152px;height:56px;background:#fbdfc9;border:2px solid #f6bf8d;border-radius:9px;"></div>
<svg class="a" style="left:2624px;top:984px;" width="34" height="31" viewBox="0 0 34 31"><path d="M17 1.800c1 0 1.800.500 2.300 1.400l13.500 24c1 1.800-.200 3.800-2.300 3.800H3.500c-2.100 0-3.300-2-2.300-3.800l13.500-24C15.200 2.300 16 1.800 17 1.800z" fill="#f6922f"/><rect x="15.200" y="10.500" width="3.600" height="10.500" rx="1.200" fill="#fde6d2"/><rect x="15.200" y="23.200" width="3.600" height="3.800" rx=".600" fill="#fde6d2"/></svg>
<span class="t" style="left:2669.50px;top:986px;font-size:25px;line-height:28px;color:#333333;font-weight:700;letter-spacing:-0.110px;">WAAM</span>
<span class="t" style="left:2766.50px;top:984px;font-size:28.5px;line-height:32px;color:#2d63c0;letter-spacing:0.582px;transform:scaleY(1.051);transform-origin:0 26px;">+2 more</span>
<div class="a" style="left:530px;top:1170px;width:2360px;height:2px;background:#dedede;"></div>
<div class="a" style="left:548px;top:1100px;width:28px;height:28px;background:#ffffff;border:2px solid #c8c8c8;border-radius:2px;"></div>
<svg class="a" style="left:650px;top:1078px" width="72" height="72" viewBox="0 0 72 72"><path d="M11 17.500L51 15c11-.500 20 7 20 16.500 0 8-5 13.500-13 14.500L14 52.500C6 53 .500 46 .500 35.500.500 26 4 18.500 11 17.500z" fill="#5a5a5a"/>
<path d="M13.500 22.500L57 19.500c8 0 13 5.500 13 12.500S65.500 44.500 58 45.500L15.500 51C7.500 51 2.500 44.500 2.500 36.500S6.500 23 13.500 22.500z" fill="#3f3f3f" stroke="#8f8f8f" stroke-width="1.700"/>
<path d="M5 44C14 41.500 40 39 60 38.500 57 42.500 55 44.500 52 45l-36.500 5C10 50.500 6.500 48 5 44z" fill="#525252"/></svg>
<div class="a" style="left:846px;top:1074px;width:550px;height:80px;background:#f5f5f5;border-radius:12px;"></div>
<span class="t" style="left:879.00px;top:1098px;font-size:28.5px;line-height:32px;color:#333333;letter-spacing:0.456px;transform:scaleY(1.051);transform-origin:0 26px;">Binoculars fixture</span>
<span class="t" style="left:1429.00px;top:1098px;font-size:28.5px;line-height:32px;color:#333333;letter-spacing:-0.035px;transform:scaleY(1.051);transform-origin:0 26px;">Assessment</span>
<span class="t" style="left:1720.00px;top:1098px;font-size:28.5px;line-height:32px;color:#333333;letter-spacing:0.163px;transform:scaleY(1.051);transform-origin:0 26px;">Katrin Avila</span>
<span class="t" style="left:1963.00px;top:1098px;font-size:28.5px;line-height:32px;color:#333333;letter-spacing:1.468px;transform:scaleY(1.051);transform-origin:0 26px;">08/30/2025</span>
<span class="t" style="left:2149.00px;top:1098px;font-size:28.5px;line-height:32px;color:#333333;letter-spacing:0.479px;transform:scaleY(1.051);transform-origin:0 26px;">Prio 2</span>
<div class="a" style="left:2335px;top:1086px;width:126px;height:56px;background:#fbdfc9;border:2px solid #f6bf8d;border-radius:9px;"></div>
<svg class="a" style="left:2348px;top:1098px;" width="34" height="31" viewBox="0 0 34 31"><path d="M17 1.800c1 0 1.800.500 2.300 1.400l13.500 24c1 1.800-.200 3.800-2.300 3.800H3.500c-2.100 0-3.300-2-2.300-3.800l13.500-24C15.200 2.300 16 1.800 17 1.800z" fill="#f6922f"/><rect x="15.200" y="10.500" width="3.600" height="10.500" rx="1.200" fill="#fde6d2"/><rect x="15.200" y="23.200" width="3.600" height="3.800" rx=".600" fill="#fde6d2"/></svg>
<span class="t" style="left:2392.50px;top:1100px;font-size:25px;line-height:28px;color:#333333;font-weight:700;letter-spacing:0.334px;">FDM</span>
<div class="a" style="left:2465px;top:1086px;width:119px;height:56px;background:#e1f5d3;border:2px solid #bfe3a6;border-radius:9px;"></div>
<svg class="a" style="left:2480px;top:1099px;" width="30" height="30" viewBox="0 0 30 30"><circle cx="15" cy="15" r="15" fill="#4e9a1e"/><path d="M6 15L12.700 21L23.800 8.800" fill="none" stroke="#ffffff" stroke-width="2.700"/></svg>
<span class="t" style="left:2523.50px;top:1100px;font-size:25px;line-height:28px;color:#333333;font-weight:700;letter-spacing:-0.975px;">SLS</span>
<div class="a" style="left:2588px;top:1086px;width:122px;height:56px;background:#e1f5d3;border:2px solid #bfe3a6;border-radius:9px;"></div>
<svg class="a" style="left:2603px;top:1099px;" width="30" height="30" viewBox="0 0 30 30"><circle cx="15" cy="15" r="15" fill="#4e9a1e"/><path d="M6 15L12.700 21L23.800 8.800" fill="none" stroke="#ffffff" stroke-width="2.700"/></svg>
<span class="t" style="left:2645.50px;top:1100px;font-size:25px;line-height:28px;color:#333333;font-weight:700;letter-spacing:0.135px;">MJF</span>
<span class="t" style="left:2714.00px;top:1098px;font-size:28.5px;line-height:32px;color:#2d63c0;letter-spacing:-0.168px;transform:scaleY(1.051);transform-origin:0 26px;">+1 more</span>
<div class="a" style="left:530px;top:1284px;width:2360px;height:2px;background:#dedede;"></div>
<div class="a" style="left:548px;top:1214px;width:28px;height:28px;background:#ffffff;border:2px solid #c8c8c8;border-radius:2px;"></div>
<svg class="a" style="left:650px;top:1192px" width="72" height="72" viewBox="0 0 72 72"><path d="M1.500 4L69.500 7.500c1.500 0 2 .800 1.900 2L66.500 65c-.200 1.800-1.200 2.500-3 2L8 56.500c-1.500-.300-2.200-1.200-2.300-2.500L.500 6C.300 4.500.700 4 1.500 4z" fill="#7c7c7c"/>
<path d="M57.500 9L69 10l-4.500 53-9.500-2z" fill="#858585"/>
<circle cx="39" cy="26.300" r="10" fill="#8a8a8a" stroke="#5e5e5e" stroke-width="1.600"/><circle cx="39" cy="26.300" r="5.500" fill="#666666"/><circle cx="39.500" cy="26" r="2.300" fill="#f2f2f2"/>
<circle cx="39" cy="47" r="10" fill="#8a8a8a" stroke="#5e5e5e" stroke-width="1.600"/><circle cx="39" cy="47" r="5.500" fill="#666666"/><circle cx="39.500" cy="46.500" r="2.300" fill="#f2f2f2"/>
<circle cx="20.700" cy="24" r="4" fill="#858585" stroke="#606060" stroke-width="1.300"/><circle cx="20.700" cy="36" r="4" fill="#858585" stroke="#606060" stroke-width="1.300"/>
<circle cx="4.500" cy="8" r="1.200" fill="#4f4f4f"/><circle cx="67.500" cy="11" r="1.200" fill="#e8e8e8"/><circle cx="63.500" cy="62.500" r="1.200" fill="#4f4f4f"/><circle cx="9" cy="53.500" r="1.200" fill="#4f4f4f"/><circle cx="63" cy="38.500" r="1.300" fill="#e8e8e8"/></svg>
<div class="a" style="left:846px;top:1188px;width:550px;height:80px;background:#f5f5f5;border-radius:12px;"></div>
<span class="t" style="left:879.00px;top:1212px;font-size:28.5px;line-height:32px;color:#333333;letter-spacing:0.172px;transform:scaleY(1.051);transform-origin:0 26px;">Brake panel</span>
<span class="t" style="left:1429.00px;top:1212px;font-size:28.5px;line-height:32px;color:#333333;letter-spacing:-0.035px;transform:scaleY(1.051);transform-origin:0 26px;">Assessment</span>
<span class="t" style="left:1722.00px;top:1212px;font-size:28.5px;line-height:32px;color:#333333;letter-spacing:0.094px;transform:scaleY(1.051);transform-origin:0 26px;">Joe Ortega</span>
<span class="t" style="left:1963.00px;top:1212px;font-size:28.5px;line-height:32px;color:#333333;letter-spacing:1.468px;transform:scaleY(1.051);transform-origin:0 26px;">08/29/2025</span>
<span class="t" style="left:2149.00px;top:1212px;font-size:28.5px;line-height:32px;color:#333333;letter-spacing:0.479px;transform:scaleY(1.051);transform-origin:0 26px;">Prio 2</span>
<div class="a" style="left:2335px;top:1200px;width:142px;height:56px;background:#fbdfc9;border:2px solid #f6bf8d;border-radius:9px;"></div>
<svg class="a" style="left:2348px;top:1212px;" width="34" height="31" viewBox="0 0 34 31"><path d="M17 1.800c1 0 1.800.500 2.300 1.400l13.500 24c1 1.800-.200 3.800-2.300 3.800H3.500c-2.100 0-3.300-2-2.300-3.800l13.500-24C15.200 2.300 16 1.800 17 1.800z" fill="#f6922f"/><rect x="15.200" y="10.500" width="3.600" height="10.500" rx="1.200" fill="#fde6d2"/><rect x="15.200" y="23.200" width="3.600" height="3.800" rx=".600" fill="#fde6d2"/></svg>
<span class="t" style="left:2392.50px;top:1214px;font-size:25px;line-height:28px;color:#333333;font-weight:700;letter-spacing:-0.051px;">DMLS</span>
<div class="a" style="left:2481px;top:1200px;width:126px;height:56px;background:#fbdfe1;border:2px solid #eeb0b4;border-radius:9px;"></div>
<svg class="a" style="left:2496px;top:1213px;" width="30" height="30" viewBox="0 0 30 30"><circle cx="15" cy="15" r="15" fill="#e8212b"/><path d="M8.300 8.300l13.400 13.400M21.700 8.300L8.300 21.700" fill="none" stroke="#ffffff" stroke-width="3"/></svg>
<span class="t" style="left:2538.50px;top:1214px;font-size:25px;line-height:28px;color:#333333;font-weight:700;letter-spacing:-0.309px;">CNC</span>
<div class="a" style="left:2611px;top:1200px;width:152px;height:56px;background:#fbdfe1;border:2px solid #eeb0b4;border-radius:9px;"></div>
<svg class="a" style="left:2626px;top:1213px;" width="30" height="30" viewBox="0 0 30 30"><circle cx="15" cy="15" r="15" fill="#e8212b"/><path d="M8.300 8.300l13.400 13.400M21.700 8.300L8.300 21.700" fill="none" stroke="#ffffff" stroke-width="3"/></svg>
<span class="t" style="left:2669.50px;top:1214px;font-size:25px;line-height:28px;color:#333333;font-weight:700;letter-spacing:-0.110px;">WAAM</span>
<span class="t" style="left:2766.50px;top:1212px;font-size:28.5px;line-height:32px;color:#2d63c0;letter-spacing:0.582px;transform:scaleY(1.051);transform-origin:0 26px;">+2 more</span>
<div class="a" style="left:530px;top:1398px;width:2360px;height:2px;background:#dedede;"></div>
<div class="a" style="left:548px;top:1328px;width:28px;height:28px;background:#ffffff;border:2px solid #c8c8c8;border-radius:2px;"></div>
<svg class="a" style="left:650px;top:1306px" width="72" height="72" viewBox="0 0 72 72"><path d="M14 1.500c0-1.200 3-1.700 7.500-1.700S29 .300 29 1.500V24H14z" fill="#7a7a7a"/>
<path d="M14 1.500V24h4V2.500z" fill="#626262"/>
<path d="M24.500 15.500A24.500 24.500 0 1 0 57.500 29" fill="none" stroke="#5f5f5f" stroke-width="14.500"/>
<path d="M27 17.500A22.500 22.500 0 1 0 56 30" fill="none" stroke="#757575" stroke-width="10"/>
<path d="M50.500 31.500L63 24.500l2.500 1.500 3-1.500L71 30.500l-4 8-7 1.500z" fill="#727272"/>
<path d="M19 60l7.500 11.500L33 66l5-6.500c-6 1.500-13 1.500-19 .500z" fill="#646464"/>
<path d="M17.500 31c-3 8 0 18 8.500 23" fill="none" stroke="#dddddd" stroke-width="1.400" stroke-dasharray="1 1.700"/>
<path d="M44 56c6-2.500 10.500-7 12.500-13" fill="none" stroke="#9a9a9a" stroke-width="1.200" stroke-dasharray="1 1.700"/></svg>
<div class="a" style="left:846px;top:1302px;width:550px;height:80px;background:#f5f5f5;border-radius:12px;"></div>
<span class="t" style="left:880.00px;top:1326px;font-size:28.5px;line-height:32px;color:#333333;letter-spacing:0.275px;transform:scaleY(1.051);transform-origin:0 26px;">Clamping Connector</span>
<span class="t" style="left:1428.00px;top:1326px;font-size:28.5px;line-height:32px;color:#333333;letter-spacing:0.542px;transform:scaleY(1.051);transform-origin:0 26px;">Qualification</span>
<span class="t" style="left:1720.00px;top:1326px;font-size:28.5px;line-height:32px;color:#333333;letter-spacing:-0.333px;transform:scaleY(1.051);transform-origin:0 26px;">Diana Keys</span>
<span class="t" style="left:1963.00px;top:1326px;font-size:28.5px;line-height:32px;color:#333333;letter-spacing:1.468px;transform:scaleY(1.051);transform-origin:0 26px;">09/23/2025</span>
<span class="t" style="left:2149.00px;top:1326px;font-size:28.5px;line-height:32px;color:#333333;letter-spacing:-0.221px;transform:scaleY(1.051);transform-origin:0 26px;">Prio 1</span>
<div class="a" style="left:2335px;top:1314px;width:142px;height:56px;background:#fbdfc9;border:2px solid #f6bf8d;border-radius:9px;"></div>
<svg class="a" style="left:2348px;top:1326px;" width="34" height="31" viewBox="0 0 34 31"><path d="M17 1.800c1 0 1.800.500 2.300 1.400l13.500 24c1 1.800-.200 3.800-2.300 3.800H3.500c-2.100 0-3.300-2-2.300-3.800l13.500-24C15.200 2.300 16 1.800 17 1.800z" fill="#f6922f"/><rect x="15.200" y="10.500" width="3.600" height="10.500" rx="1.200" fill="#fde6d2"/><rect x="15.200" y="23.200" width="3.600" height="3.800" rx=".600" fill="#fde6d2"/></svg>
<span class="t" style="left:2392.50px;top:1328px;font-size:25px;line-height:28px;color:#333333;font-weight:700;letter-spacing:-0.051px;">DMLS</span>
<div class="a" style="left:2481px;top:1314px;width:126px;height:56px;background:#fbdfe1;border:2px solid #eeb0b4;border-radius:9px;"></div>
<svg class="a" style="left:2496px;top:1327px;" width="30" height="30" viewBox="0 0 30 30"><circle cx="15" cy="15" r="15" fill="#e8212b"/><path d="M8.300 8.300l13.400 13.400M21.700 8.300L8.300 21.700" fill="none" stroke="#ffffff" stroke-width="3"/></svg>
<span class="t" style="left:2538.50px;top:1328px;font-size:25px;line-height:28px;color:#333333;font-weight:700;letter-spacing:-0.309px;">CNC</span>
<div class="a" style="left:2611px;top:1314px;width:152px;height:56px;background:#fbdfe1;border:2px solid #eeb0b4;border-radius:9px;"></div>
<svg class="a" style="left:2626px;top:1327px;" width="30" height="30" viewBox="0 0 30 30"><circle cx="15" cy="15" r="15" fill="#e8212b"/><path d="M8.300 8.300l13.400 13.400M21.700 8.300L8.300 21.700" fill="none" stroke="#ffffff" stroke-width="3"/></svg>
<span class="t" style="left:2669.50px;top:1328px;font-size:25px;line-height:28px;color:#333333;font-weight:700;letter-spacing:-0.110px;">WAAM</span>
<span class="t" style="left:2766.50px;top:1326px;font-size:28.5px;line-height:32px;color:#2d63c0;letter-spacing:0.582px;transform:scaleY(1.051);transform-origin:0 26px;">+2 more</span>
<div class="a" style="left:530px;top:1512px;width:2360px;height:2px;background:#dedede;"></div>
<div class="a" style="left:548px;top:1442px;width:28px;height:28px;background:#ffffff;border:2px solid #c8c8c8;border-radius:2px;"></div>
<svg class="a" style="left:650px;top:1420px" width="72" height="72" viewBox="0 0 72 72"><defs><linearGradient id="g5" x1="0" y1="0" x2="1" y2="0"><stop offset="0" stop-color="#5a5a5a"/><stop offset=".45" stop-color="#7d7d7d"/><stop offset="1" stop-color="#505050"/></linearGradient></defs>
<path d="M.800 33C.800 41 1.500 48 3 50.500 10 57.500 24 60.800 36.400 60.800S62.500 57.500 69.500 50C71 47 71.500 41 71.500 33z" fill="#3a3a3a"/>
<path d="M2.200 47C10 56 24 58.500 36.400 58.500S62.500 55.500 70 46.500L69.500 50C62.500 57.500 50 60.800 36.400 60.800S10 57.500 3 50.500z" fill="#858585"/>
<path d="M3 37L13 40.500 21.500 55.500 8 50.500 3.500 46z" fill="#6a6a6a"/>
<path d="M12.500 40l6 .500 9.500 15.500-6 .500zM37.500 42l5.500-.500 9 14-5.500.800zM61.500 39l3.500-1 3 10-3 2z" fill="#8b8b8b"/>
<path d="M0 33C0 25 14 21.500 21 20 23 19.500 23.300 17 23.300 15V10.500H49V15C49 17 49.300 19.500 51.500 20 58 21.500 72 25 72 33 72 38.500 56 42 36.400 42S0 38.500 0 33z" fill="url(#g5)"/>
<path d="M.800 33.700C8 38.500 22 41.300 36.400 41.300S64 38.500 71.400 33.200" fill="none" stroke="#8e8e8e" stroke-width="2.200"/>
<ellipse cx="36.100" cy="10.500" rx="12.900" ry="1.900" fill="#5f5f5f"/></svg>
<div class="a" style="left:846px;top:1416px;width:550px;height:80px;background:#f5f5f5;border-radius:12px;"></div>
<span class="t" style="left:880.00px;top:1440px;font-size:28.5px;line-height:32px;color:#333333;letter-spacing:0.240px;transform:scaleY(1.051);transform-origin:0 26px;">Closed Centrifugal Impeller</span>
<span class="t" style="left:1428.00px;top:1440px;font-size:28.5px;line-height:32px;color:#333333;letter-spacing:0.542px;transform:scaleY(1.051);transform-origin:0 26px;">Qualification</span>
<span class="t" style="left:1720.00px;top:1440px;font-size:28.5px;line-height:32px;color:#333333;letter-spacing:-0.333px;transform:scaleY(1.051);transform-origin:0 26px;">Diana Keys</span>
<span class="t" style="left:1963.00px;top:1440px;font-size:28.5px;line-height:32px;color:#333333;letter-spacing:1.468px;transform:scaleY(1.051);transform-origin:0 26px;">08/24/2025</span>
<span class="t" style="left:2149.00px;top:1440px;font-size:28.5px;line-height:32px;color:#333333;letter-spacing:-0.221px;transform:scaleY(1.051);transform-origin:0 26px;">Prio 1</span>
<div class="a" style="left:2335px;top:1428px;width:142px;height:56px;background:#fbdfc9;border:2px solid #f6bf8d;border-radius:9px;"></div>
<svg class="a" style="left:2348px;top:1440px;" width="34" height="31" viewBox="0 0 34 31"><path d="M17 1.800c1 0 1.800.500 2.300 1.400l13.500 24c1 1.800-.200 3.800-2.300 3.800H3.500c-2.100 0-3.300-2-2.300-3.800l13.500-24C15.200 2.300 16 1.800 17 1.800z" fill="#f6922f"/><rect x="15.200" y="10.500" width="3.600" height="10.500" rx="1.200" fill="#fde6d2"/><rect x="15.200" y="23.200" width="3.600" height="3.800" rx=".600" fill="#fde6d2"/></svg>
<span class="t" style="left:2392.50px;top:1442px;font-size:25px;line-height:28px;color:#333333;font-weight:700;letter-spacing:-0.051px;">DMLS</span>
<div class="a" style="left:2481px;top:1428px;width:126px;height:56px;background:#fbdfe1;border:2px solid #eeb0b4;border-radius:9px;"></div>
<svg class="a" style="left:2496px;top:1441px;" width="30" height="30" viewBox="0 0 30 30"><circle cx="15" cy="15" r="15" fill="#e8212b"/><path d="M8.300 8.300l13.400 13.400M21.700 8.300L8.300 21.700" fill="none" stroke="#ffffff" stroke-width="3"/></svg>
<span class="t" style="left:2538.50px;top:1442px;font-size:25px;line-height:28px;color:#333333;font-weight:700;letter-spacing:-0.309px;">CNC</span>
<div class="a" style="left:2611px;top:1428px;width:152px;height:56px;background:#fbdfe1;border:2px solid #eeb0b4;border-radius:9px;"></div>
<svg class="a" style="left:2626px;top:1441px;" width="30" height="30" viewBox="0 0 30 30"><circle cx="15" cy="15" r="15" fill="#e8212b"/><path d="M8.300 8.300l13.400 13.400M21.700 8.300L8.300 21.700" fill="none" stroke="#ffffff" stroke-width="3"/></svg>
<span class="t" style="left:2669.50px;top:1442px;font-size:25px;line-height:28px;color:#333333;font-weight:700;letter-spacing:-0.110px;">WAAM</span>
<span class="t" style="left:2766.50px;top:1440px;font-size:28.5px;line-height:32px;color:#2d63c0;letter-spacing:0.582px;transform:scaleY(1.051);transform-origin:0 26px;">+2 more</span>
<div class="a" style="left:530px;top:1626px;width:2360px;height:2px;background:#dedede;"></div>
<div class="a" style="left:548px;top:1556px;width:28px;height:28px;background:#ffffff;border:2px solid #c8c8c8;border-radius:2px;"></div>
<svg class="a" style="left:650px;top:1534px" width="72" height="72" viewBox="0 0 72 72"><path d="M1.500 50.500L22.500 45.500 71.500 54.500 70 67 1.500 55.500z" fill="#6f6f6f"/>
<path d="M1.500 50.500L22.500 45.500 71.500 54.500 70.500 58 22 50 1.500 54z" fill="#838383"/>
<path d="M5.500 29h17l-1.500 19H7.500z" fill="#727272"/>
<path d="M.500 19.500c0-1 25-1 25 0l-1 8.500c-2 1.500-21 1.500-23 0z" fill="#7d7d7d"/>
<path d="M3.500 5.500c0-1.500 17-1.500 17 0V20h-17z" fill="#787878"/><ellipse cx="12" cy="5.500" rx="8.500" ry="1.500" fill="#8b8b8b"/>
<path d="M54.500 25c0-1.200 16.500-1.200 16.500 0l-1.500 32c-2 2-11 2-13.500 0z" fill="#737373"/>
<path d="M54.500 25c0-1.200 16.500-1.200 16.500 0l-.300 8c-3 1.200-13 1.200-16 0z" fill="#7f7f7f"/>
<path d="M58 8c0-1.200 11.500-1.200 11.500 0v16.500H58z" fill="#7a7a7a"/><ellipse cx="63.800" cy="8" rx="5.700" ry="1.200" fill="#8b8b8b"/></svg>
<div class="a" style="left:846px;top:1530px;width:550px;height:80px;background:#f5f5f5;border-radius:12px;"></div>
<span class="t" style="left:880.00px;top:1554px;font-size:28.5px;line-height:32px;color:#333333;letter-spacing:0.006px;transform:scaleY(1.051);transform-origin:0 26px;">CMM Quality Fixture v1</span>
<span class="t" style="left:1427.00px;top:1554px;font-size:28.5px;line-height:32px;color:#333333;letter-spacing:0.229px;transform:scaleY(1.051);transform-origin:0 26px;">Redesign - Rejected</span>
<span class="t" style="left:1720.00px;top:1554px;font-size:28.5px;line-height:32px;color:#333333;letter-spacing:0.257px;transform:scaleY(1.051);transform-origin:0 26px;">Mario Janowick</span>
<span class="t" style="left:1963.00px;top:1554px;font-size:28.5px;line-height:32px;color:#333333;letter-spacing:1.468px;transform:scaleY(1.051);transform-origin:0 26px;">09/10/2025</span>
<span class="t" style="left:2149.00px;top:1554px;font-size:28.5px;line-height:32px;color:#333333;letter-spacing:0.479px;transform:scaleY(1.051);transform-origin:0 26px;">Prio 2</span>
<div class="a" style="left:2335px;top:1542px;width:126px;height:56px;background:#fbdfc9;border:2px solid #f6bf8d;border-radius:9px;"></div>
<svg class="a" style="left:2348px;top:1554px;" width="34" height="31" viewBox="0 0 34 31"><path d="M17 1.800c1 0 1.800.500 2.300 1.400l13.500 24c1 1.800-.200 3.800-2.300 3.800H3.500c-2.100 0-3.300-2-2.300-3.800l13.500-24C15.200 2.300 16 1.800 17 1.800z" fill="#f6922f"/><rect x="15.200" y="10.500" width="3.600" height="10.500" rx="1.200" fill="#fde6d2"/><rect x="15.200" y="23.200" width="3.600" height="3.800" rx=".600" fill="#fde6d2"/></svg>
<span class="t" style="left:2392.50px;top:1556px;font-size:25px;line-height:28px;color:#333333;font-weight:700;letter-spacing:0.334px;">FDM</span>
<div class="a" style="left:2465px;top:1542px;width:119px;height:56px;background:#e1f5d3;border:2px solid #bfe3a6;border-radius:9px;"></div>
<svg class="a" style="left:2480px;top:1555px;" width="30" height="30" viewBox="0 0 30 30"><circle cx="15" cy="15" r="13.200" fill="none" stroke="#4e9a1e" stroke-width="3"/><path d="M7.800 15.300L12.600 20L22 10.500" fill="none" stroke="#4e9a1e" stroke-width="2.700"/></svg>
<span class="t" style="left:2523.50px;top:1556px;font-size:25px;line-height:28px;color:#333333;font-weight:700;letter-spacing:-0.975px;">SLS</span>
<div class="a" style="left:2588px;top:1542px;width:122px;height:56px;background:#fbdfc9;border:2px solid #f6bf8d;border-radius:9px;"></div>
<svg class="a" style="left:2601px;top:1554px;" width="34" height="31" viewBox="0 0 34 31"><path d="M17 1.800c1 0 1.800.500 2.300 1.400l13.500 24c1 1.800-.200 3.800-2.300 3.800H3.500c-2.100 0-3.300-2-2.300-3.800l13.500-24C15.200 2.300 16 1.800 17 1.800z" fill="#f6922f"/><rect x="15.200" y="10.500" width="3.600" height="10.500" rx="1.200" fill="#fde6d2"/><rect x="15.200" y="23.200" width="3.600" height="3.800" rx=".600" fill="#fde6d2"/></svg>
<span class="t" style="left:2645.50px;top:1556px;font-size:25px;line-height:28px;color:#333333;font-weight:700;letter-spacing:0.135px;">MJF</span>
<span class="t" style="left:2714.00px;top:1554px;font-size:28.5px;line-height:32px;color:#2d63c0;letter-spacing:-0.168px;transform:scaleY(1.051);transform-origin:0 26px;">+1 more</span>
<div class="a" style="left:530px;top:1740px;width:2360px;height:2px;background:#dedede;"></div>
<div class="a" style="left:548px;top:1670px;width:28px;height:28px;background:#ffffff;border:2px solid #c8c8c8;border-radius:2px;"></div>
<svg class="a" style="left:650px;top:1648px" width="72" height="72" viewBox="0 0 72 72"><path d="M6.500 54L17 42l49 20-15 10-17-12-19 5.500z" fill="#6c6c6c"/>
<path d="M17 42l49 20-3 2L17 45z" fill="#858585"/>
<path d="M11 60.500l5-1.500 1.500 2-5 1.500zM18 57l5-1.500 1.500 2-5 1.500z" fill="#f0f0f0"/>
<path d="M9 17.500h5.500V57H9z" fill="#7a7a7a"/>
<path d="M5 6.500c0-1 14.500-1 14.500 0V17c-2 1-12.500 1-14.500 0z" fill="#747474"/>
<path d="M7.500 0h6v6h-6z" fill="#808080"/>
<path d="M18.500 5.500c0-1 11.500-1 11.500 0V44c-2 1.200-9.500 1.200-11.500 0z" fill="#6e6e6e"/>
<path d="M17.500 17c0-1 13.500-1 13.500 0v10c-2 1.200-11.500 1.200-13.500 0z" fill="#7c7c7c"/>
<path d="M28 6.500l14 2.500v2L28 9z" fill="#8a8a8a"/>
<path d="M43.500 38h18.500l-1.500 21.500c-3 1.500-12 1.500-15 0z" fill="#707070"/>
<path d="M39 27c0-1.200 28-1.200 28 0l-1 10.500c-3 2-23 2-26 0z" fill="#7d7d7d"/>
<path d="M44 11.500c0-1.500 19.500-1.500 19.500 0V27.500H44z" fill="#787878"/><ellipse cx="53.800" cy="11.500" rx="9.700" ry="1.700" fill="#8c8c8c"/></svg>
<div class="a" style="left:846px;top:1644px;width:550px;height:80px;background:#f5f5f5;border-radius:12px;"></div>
<span class="t" style="left:880.00px;top:1668px;font-size:28.5px;line-height:32px;color:#333333;letter-spacing:0.172px;transform:scaleY(1.051);transform-origin:0 26px;">CMM Quality Fixture v2</span>
<span class="t" style="left:1427.00px;top:1668px;font-size:28.5px;line-height:32px;color:#333333;letter-spacing:0.229px;transform:scaleY(1.051);transform-origin:0 26px;">Redesign - Rejected</span>
<span class="t" style="left:1721.00px;top:1668px;font-size:28.5px;line-height:32px;color:#333333;letter-spacing:0.213px;transform:scaleY(1.051);transform-origin:0 26px;">Chiara Tolkien</span>
<span class="t" style="left:1963.00px;top:1668px;font-size:28.5px;line-height:32px;color:#333333;letter-spacing:1.468px;transform:scaleY(1.051);transform-origin:0 26px;">06/24/2025</span>
<span class="t" style="left:2149.00px;top:1668px;font-size:28.5px;line-height:32px;color:#333333;letter-spacing:0.479px;transform:scaleY(1.051);transform-origin:0 26px;">Prio 2</span>
<div class="a" style="left:2335px;top:1656px;width:126px;height:56px;background:#fbdfc9;border:2px solid #f6bf8d;border-radius:9px;"></div>
<svg class="a" style="left:2348px;top:1668px;" width="34" height="31" viewBox="0 0 34 31"><path d="M17 1.800c1 0 1.800.500 2.300 1.400l13.500 24c1 1.800-.200 3.800-2.300 3.800H3.500c-2.100 0-3.300-2-2.300-3.800l13.500-24C15.200 2.300 16 1.800 17 1.800z" fill="#f6922f"/><rect x="15.200" y="10.500" width="3.600" height="10.500" rx="1.200" fill="#fde6d2"/><rect x="15.200" y="23.200" width="3.600" height="3.800" rx=".600" fill="#fde6d2"/></svg>
<span class="t" style="left:2392.50px;top:1670px;font-size:25px;line-height:28px;color:#333333;font-weight:700;letter-spacing:0.334px;">FDM</span>
<div class="a" style="left:2465px;top:1656px;width:119px;height:56px;background:#fbdfc9;border:2px solid #f6bf8d;border-radius:9px;"></div>
<svg class="a" style="left:2478px;top:1668px;" width="34" height="31" viewBox="0 0 34 31"><path d="M17 1.800c1 0 1.800.500 2.300 1.400l13.500 24c1 1.800-.200 3.800-2.300 3.800H3.500c-2.100 0-3.300-2-2.300-3.800l13.500-24C15.200 2.300 16 1.800 17 1.800z" fill="#f6922f"/><rect x="15.200" y="10.500" width="3.600" height="10.500" rx="1.200" fill="#fde6d2"/><rect x="15.200" y="23.200" width="3.600" height="3.800" rx=".600" fill="#fde6d2"/></svg>
<span class="t" style="left:2523.50px;top:1670px;font-size:25px;line-height:28px;color:#333333;font-weight:700;letter-spacing:-0.975px;">SLS</span>
<div class="a" style="left:2588px;top:1656px;width:122px;height:56px;background:#fbdfc9;border:2px solid #f6bf8d;border-radius:9px;"></div>
<svg class="a" style="left:2601px;top:1668px;" width="34" height="31" viewBox="0 0 34 31"><path d="M17 1.800c1 0 1.800.500 2.300 1.400l13.500 24c1 1.800-.200 3.800-2.300 3.800H3.500c-2.100 0-3.300-2-2.300-3.800l13.500-24C15.200 2.300 16 1.800 17 1.800z" fill="#f6922f"/><rect x="15.200" y="10.500" width="3.600" height="10.500" rx="1.200" fill="#fde6d2"/><rect x="15.200" y="23.200" width="3.600" height="3.800" rx=".600" fill="#fde6d2"/></svg>
<span class="t" style="left:2645.50px;top:1670px;font-size:25px;line-height:28px;color:#333333;font-weight:700;letter-spacing:0.135px;">MJF</span>
<span class="t" style="left:2714.00px;top:1668px;font-size:28.5px;line-height:32px;color:#2d63c0;letter-spacing:-0.168px;transform:scaleY(1.051);transform-origin:0 26px;">+1 more</span>
<div class="a" style="left:548px;top:1784px;width:28px;height:28px;background:#ffffff;border:2px solid #c8c8c8;border-radius:2px;"></div>
<svg class="a" style="left:1788px;top:848px;" width="26" height="36" viewBox="0 0 26 36"><path d="M3.800 2.800V23.800L8.400 20L13.500 30.800L16.700 29.400L12.200 19L20 18.700z" fill="#05060a" stroke="#ffffff" stroke-width="2.600" stroke-linejoin="miter" paint-order="stroke" style="filter:drop-shadow(0 1px 1.500px rgba(0,0,0,.35))"/></svg>
<svg class="a" style="left:0px;top:1730px;" width="24" height="24" viewBox="0 0 24 24"><path d="M0 0v24h24A24 24 0 0 1 0 0z" fill="#05070d"/></svg>
<svg class="a" style="left:2916px;top:1730px;" width="24" height="24" viewBox="0 0 24 24"><path d="M24 0v24H0A24 24 0 0 0 24 0z" fill="#05070d"/></svg>
</div></body></html>
